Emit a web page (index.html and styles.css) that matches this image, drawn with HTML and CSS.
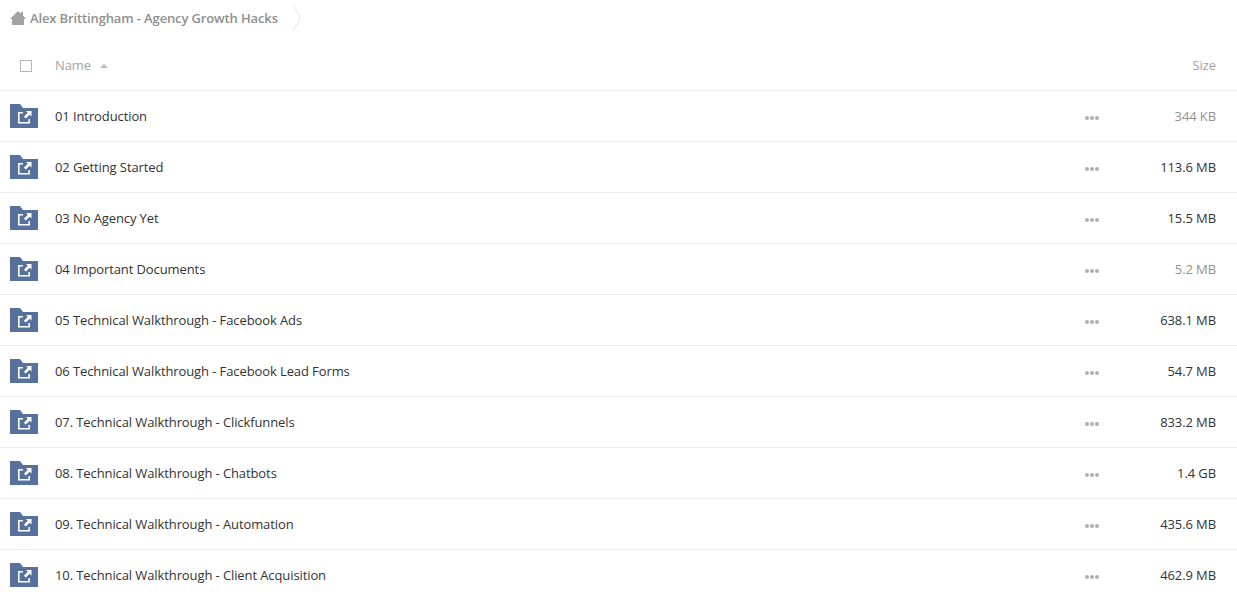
FILE: index.html
```html
<!DOCTYPE html>
<html lang="en">
<head>
  <meta charset="UTF-8">
  <title>Alex Brittingham - Agency Growth Hacks</title>
  <link rel="stylesheet" href="styles.css">
</head>
<body>
  <svg class="defs" width="0" height="0">
    <symbol id="folder" viewBox="0 0 28 24">
      <path d="M0 0h10l3 4h15v20H0z" fill="#56719b"/>
      <path d="M13 8.800H8.800V18.700H19.200V15" fill="none" stroke="#fff" stroke-width="1.600"/>
      <path d="M16 7h5.500v5.500l-1.800-1.800-3.900 3.900-1.900-1.900 3.900-3.900z" fill="#fff"/>
    </symbol>
  </svg>

  <div class="crumbs">
    <svg class="home" width="16" height="14" viewBox="0 0 16 14">
      <path d="M8 0 11 2.500V1h2v3.500L16 8h-2v6H2V8H0z" fill="#a3a3a3"/>
    </svg>
    <span class="crumb">Alex Brittingham - Agency Growth Hacks</span>
    <svg class="chevron" width="10" height="26" viewBox="0 0 10 26">
      <path d="M1 0l7.500 13L1 26" fill="none" stroke="#e4e4e4"/>
    </svg>
  </div>

  <div class="head">
    <span class="check"></span>
    <span class="name-head">Name <i class="sort"></i></span>
    <span class="size-head">Size</span>
  </div>

  <div class="row">
    <svg class="folder"><use href="#folder"/></svg>
    <span class="name">01 Introduction</span>
    <span class="dots"><i></i><i></i><i></i></span>
    <span class="size muted">344 KB</span>
  </div>
  <div class="row">
    <svg class="folder"><use href="#folder"/></svg>
    <span class="name">02 Getting Started</span>
    <span class="dots"><i></i><i></i><i></i></span>
    <span class="size">113.6 MB</span>
  </div>
  <div class="row">
    <svg class="folder"><use href="#folder"/></svg>
    <span class="name">03 No Agency Yet</span>
    <span class="dots"><i></i><i></i><i></i></span>
    <span class="size">15.5 MB</span>
  </div>
  <div class="row">
    <svg class="folder"><use href="#folder"/></svg>
    <span class="name">04 Important Documents</span>
    <span class="dots"><i></i><i></i><i></i></span>
    <span class="size muted">5.2 MB</span>
  </div>
  <div class="row">
    <svg class="folder"><use href="#folder"/></svg>
    <span class="name">05 Technical Walkthrough - Facebook Ads</span>
    <span class="dots"><i></i><i></i><i></i></span>
    <span class="size">638.1 MB</span>
  </div>
  <div class="row">
    <svg class="folder"><use href="#folder"/></svg>
    <span class="name">06 Technical Walkthrough - Facebook Lead Forms</span>
    <span class="dots"><i></i><i></i><i></i></span>
    <span class="size">54.7 MB</span>
  </div>
  <div class="row">
    <svg class="folder"><use href="#folder"/></svg>
    <span class="name">07. Technical Walkthrough - Clickfunnels</span>
    <span class="dots"><i></i><i></i><i></i></span>
    <span class="size">833.2 MB</span>
  </div>
  <div class="row">
    <svg class="folder"><use href="#folder"/></svg>
    <span class="name">08. Technical Walkthrough - Chatbots</span>
    <span class="dots"><i></i><i></i><i></i></span>
    <span class="size">1.4 GB</span>
  </div>
  <div class="row">
    <svg class="folder"><use href="#folder"/></svg>
    <span class="name">09. Technical Walkthrough - Automation</span>
    <span class="dots"><i></i><i></i><i></i></span>
    <span class="size">435.6 MB</span>
  </div>
  <div class="row">
    <svg class="folder"><use href="#folder"/></svg>
    <span class="name">10. Technical Walkthrough - Client Acquisition</span>
    <span class="dots"><i></i><i></i><i></i></span>
    <span class="size">462.9 MB</span>
  </div>
</body>
</html>
```

FILE: styles.css
```css
html, body {
  height: 100%;
  overflow: hidden;
}
body {
  margin: 0;
  background: #fff;
  font-family: "Open Sans", sans-serif;
  font-size: 13px;
  letter-spacing: -0.1px;
  color: #333;
}
.defs {
  display: block;
  height: 0;
}
.crumbs {
  display: flex;
  align-items: center;
  height: 36px;
  padding-left: 10px;
}
.home {
  margin-right: 4px;
}
.crumb {
  color: #8f8f8f;
  font-weight: 600;
  font-size: 13px;
  letter-spacing: -0.13px;
}
.chevron {
  margin-left: 14px;
}
.head {
  display: flex;
  align-items: center;
  height: 55px;
  padding: 4px 21px 0 20px;
  box-sizing: border-box;
  border-bottom: 1px solid #ececec;
  color: #a3a3a3;
}
.check {
  width: 10px;
  height: 10px;
  border: 1px solid #b5b5b5;
  margin: 2px 23px 0 0;
}
.name-head {
  flex: 1;
}
.sort {
  display: inline-block;
  width: 0;
  height: 0;
  margin-left: 6px;
  vertical-align: 2px;
  border-left: 4px solid transparent;
  border-right: 4px solid transparent;
  border-bottom: 4px solid #bdbdbd;
}
.row {
  display: flex;
  align-items: center;
  height: 50px;
  padding: 0 21px 0 10px;
  border-bottom: 1px solid #ececec;
}
.folder {
  width: 28px;
  height: 24px;
  margin-right: 17px;
  flex: none;
}
.name {
  flex: 1;
}
.dots {
  display: flex;
  gap: 1px;
  margin-top: 3px;
}
.dots i {
  width: 4px;
  height: 4px;
  border-radius: 50%;
  background: #b0b0b0;
}
.size {
  width: 117px;
  text-align: right;
}
.muted {
  color: #929292;
}
```
